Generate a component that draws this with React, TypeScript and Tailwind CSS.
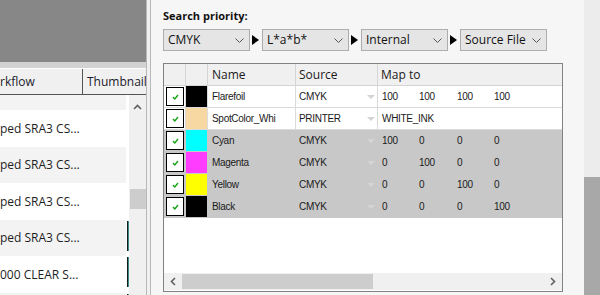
import React from "react";

type RowData = {
  name: string;
  swatch: string;
  src: string;
  map: string[];
  sel: boolean;
};

const rows: RowData[] = [
  { name: "Flarefoil", swatch: "bg-[#000000]", src: "CMYK", map: ["100", "100", "100", "100"], sel: false },
  { name: "SpotColor_Whi", swatch: "bg-[#f8d8a2]", src: "PRINTER", map: ["WHITE_INK"], sel: false },
  { name: "Cyan", swatch: "bg-[#00ffff]", src: "CMYK", map: ["100", "0", "0", "0"], sel: true },
  { name: "Magenta", swatch: "bg-[#ff3cff]", src: "CMYK", map: ["0", "100", "0", "0"], sel: true },
  { name: "Yellow", swatch: "bg-[#ffff00]", src: "CMYK", map: ["0", "0", "100", "0"], sel: true },
  { name: "Black", swatch: "bg-[#000000]", src: "CMYK", map: ["0", "0", "0", "100"], sel: true },
];

const mapWidths = ["w-[37px]", "w-[38px]", "w-[37px]", "w-auto"];

function Chevron() {
  return (
    <svg width="9" height="5" viewBox="0 0 9 5" className="shrink-0">
      <polyline points="0.5,0.5 4.5,4.5 8.5,0.5" fill="none" stroke="#555" strokeWidth="1" />
    </svg>
  );
}

function Dropdown({ label }: { label: string }) {
  return (
    <div className="w-[87px] h-[22px] shrink-0 bg-[#e5e5e5] border border-[#adadad] flex items-center justify-between pl-[4px] pr-[5px]">
      <span className="text-[12px] leading-none text-[#111]">{label}</span>
      <Chevron />
    </div>
  );
}

function Arrow() {
  return <div className="ml-[2px] mr-[3px] w-0 h-0 shrink-0 border-y-[5px] border-y-transparent border-l-[7px] border-l-black" />;
}

function Row({ r }: { r: RowData }) {
  const line = r.sel ? "border-[#c8c8c8]" : "border-[#dadada]";
  return (
    <div className={`flex h-[22px] border-b ${line} ${r.sel ? "bg-[#c8c8c8]" : "bg-white"}`}>
      <div className={`w-[22px] border-r ${line} flex items-center`}>
        <div className="ml-[2px] w-[18px] h-[19px] border border-black bg-white flex items-center justify-center">
          <svg width="7" height="6" viewBox="0 0 7 6">
            <polyline points="1,3 2.8,5 6,1" fill="none" stroke="#19a319" strokeWidth="1.4" />
          </svg>
        </div>
      </div>
      <div className={`w-[22px] border-r ${line} ${r.swatch}`} />
      <div className={`w-[88px] border-r ${line} pl-[4px] flex items-center overflow-hidden whitespace-nowrap`}>
        <span className="font-['Liberation_Sans',Arial,sans-serif] text-[10px] tracking-[-0.3px] text-[#1a1a1a]">{r.name}</span>
      </div>
      <div className={`w-[82px] border-r ${line} pl-[3px] pr-[2px] flex items-center justify-between`}>
        <span className="font-['Liberation_Sans',Arial,sans-serif] text-[10px] tracking-[-0.3px] text-[#1a1a1a]">{r.src}</span>
        <svg width="8" height="4" viewBox="0 0 8 4">
          <polygon points="0,0 8,0 4,4" fill="#d4d4d4" />
        </svg>
      </div>
      <div className="flex-1 pl-[4px] flex items-center whitespace-nowrap">
        {r.map.map((v, i) => (
          <span
            key={i}
            className={`${mapWidths[i]} font-['Liberation_Sans',Arial,sans-serif] text-[10px] tracking-[-0.3px] text-[#1a1a1a]`}
          >
            {v}
          </span>
        ))}
      </div>
    </div>
  );
}

function ListRow({ h, gray, text, teal }: { h: string; gray: boolean; text?: string; teal?: boolean }) {
  return (
    <div className={`${h} flex`}>
      <div className={`w-[126px] flex items-center overflow-hidden whitespace-nowrap ${gray ? "bg-[#f3f3f3]" : "bg-white"}`}>
        {text && <span className="text-[12px] text-[#1e1e1e]">{text}</span>}
      </div>
      <div className="w-[3px] bg-white flex">
        {teal && (
          <div className="mt-[1px] ml-[1px] w-[2px] h-[30px] bg-[#3e8a84] border-l border-[#0e1e1e]" />
        )}
      </div>
    </div>
  );
}

export default function App() {
  return (
    <div className="w-[600px] h-[295px] flex overflow-hidden bg-[#f6f6f6] font-['Open_Sans',sans-serif]">
      {/* Left panel */}
      <div className="w-[146px] h-full shrink-0 flex flex-col overflow-hidden">
        <div className="h-[62px] bg-[#878787] shrink-0" />
        <div className="h-[6px] bg-[#d2d2d2] shrink-0" />
        <div className="h-[27px] shrink-0 flex bg-[#f0f0f0] border-t border-white border-b border-b-[#555]">
          <div className="w-[83px] border-r border-[#555] flex items-center overflow-hidden whitespace-nowrap">
            <span className="text-[12px] text-[#1b1b2b]">rkflow</span>
          </div>
          <div className="flex-1 pl-[4px] flex items-center overflow-hidden whitespace-nowrap">
            <span className="text-[12px] text-[#1b1b2b]">Thumbnail</span>
          </div>
        </div>
        <div className="flex-1 flex min-h-0">
          <div className="w-[129px] flex flex-col bg-white overflow-hidden">
            <ListRow h="h-[15px] shrink-0" gray />
            <ListRow h="h-[37px] shrink-0" gray={false} text="ped SRA3 CS..." />
            <ListRow h="h-[36px] shrink-0" gray text="ped SRA3 CS..." />
            <ListRow h="h-[37px] shrink-0" gray={false} text="ped SRA3 CS..." />
            <ListRow h="h-[36px] shrink-0" gray text="ped SRA3 CS..." teal />
            <ListRow h="h-[37px] shrink-0" gray={false} text="000 CLEAR S..." teal />
            <ListRow h="h-[37px] shrink-0" gray teal />
          </div>
          <div className="w-[17px] bg-[#f0f0f0] flex flex-col items-center">
            <svg width="9" height="6" viewBox="0 0 9 6" className="mt-[9px]">
              <polyline points="1,5 4.5,1.5 8,5" fill="none" stroke="#606060" strokeWidth="1.6" />
            </svg>
            <div className="mt-[79px] w-[16px] h-[20px] bg-[#cdcdcd]" />
          </div>
        </div>
      </div>

      {/* Divider */}
      <div className="w-[1px] bg-[#b8b8b8] shrink-0" />
      <div className="w-[3px] bg-[#f0f0f0] shrink-0" />
      <div className="w-[1px] bg-[#b8b8b8] shrink-0" />

      {/* Right panel */}
      <div className="w-[433px] shrink-0 bg-[#f6f6f6] pl-[12px] pt-[8px] flex flex-col">
        <div className="text-[11px] leading-[15px] font-bold text-[#111]">Search priority:</div>
        <div className="mt-[6px] flex items-center">
          <Dropdown label="CMYK" />
          <Arrow />
          <Dropdown label="L*a*b*" />
          <Arrow />
          <Dropdown label="Internal" />
          <Arrow />
          <Dropdown label="Source File" />
        </div>
        <div className="mt-[12px] w-[400px] h-[229px] border border-[#828282] bg-white flex flex-col">
          <div className="flex h-[22px] shrink-0 bg-[#f0f0f0] border-b border-[#d5d5d5] text-[12px] text-[#1a1a1a]">
            <div className="w-[22px] border-r border-[#d5d5d5]" />
            <div className="w-[22px] border-r border-[#d5d5d5]" />
            <div className="w-[88px] border-r border-[#d5d5d5] pl-[4px] flex items-center">Name</div>
            <div className="w-[82px] border-r border-[#d5d5d5] pl-[3px] flex items-center">Source</div>
            <div className="flex-1 pl-[3px] flex items-center">Map to</div>
          </div>
          {rows.map((r) => (
            <Row key={r.name} r={r} />
          ))}
          <div className="flex-1" />
          <div className="h-[17px] mb-[1px] shrink-0 bg-[#f0f0f0] flex items-center">
            <div className="w-[18px] flex justify-center">
              <svg width="6" height="9" viewBox="0 0 6 9">
                <polyline points="5,1 1.5,4.5 5,8" fill="none" stroke="#606060" strokeWidth="1.6" />
              </svg>
            </div>
            <div className="w-[191px] h-[15px] bg-[#cdcdcd]" />
            <div className="flex-1" />
            <div className="w-[18px] flex justify-center">
              <svg width="6" height="9" viewBox="0 0 6 9">
                <polyline points="1,1 4.5,4.5 1,8" fill="none" stroke="#606060" strokeWidth="1.6" />
              </svg>
            </div>
          </div>
        </div>
      </div>

      {/* Right strip */}
      <div className="w-[16px] shrink-0 flex flex-col">
        <div className="h-[177px] bg-[#ececec]" />
        <div className="flex-1 bg-[#a8a8a8]" />
      </div>
    </div>
  );
}
